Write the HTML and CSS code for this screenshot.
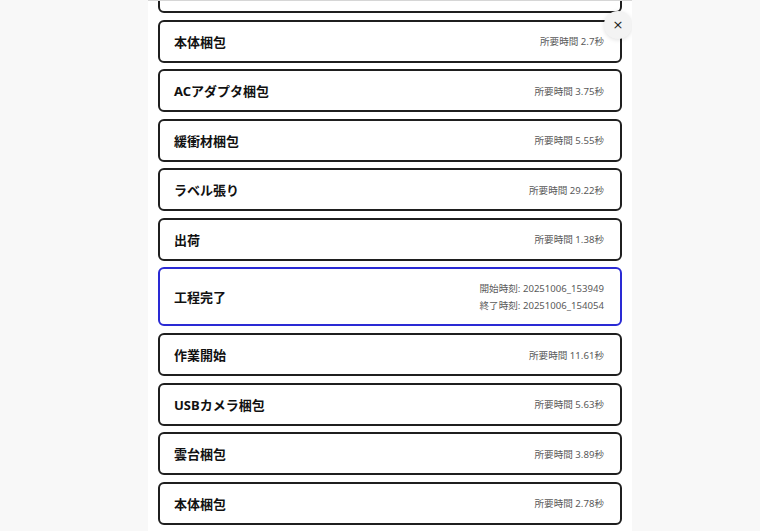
FILE: index.html
```html
<!DOCTYPE html>
<html lang="ja">
<head>
<meta charset="utf-8">
<link rel="stylesheet" href="styles.css">
</head>
<body>
<div class="panel">
  <div class="list">
    <div class="card" aria-hidden="true"></div>
    <div class="card"><span class="name">本体梱包</span><span class="meta">所要時間 2.7秒</span></div>
    <div class="card"><span class="name">ACアダプタ梱包</span><span class="meta">所要時間 3.75秒</span></div>
    <div class="card"><span class="name">緩衝材梱包</span><span class="meta">所要時間 5.55秒</span></div>
    <div class="card"><span class="name">ラベル張り</span><span class="meta">所要時間 29.22秒</span></div>
    <div class="card"><span class="name">出荷</span><span class="meta">所要時間 1.38秒</span></div>
    <div class="card card-done"><span class="name">工程完了</span><span class="meta meta-stack"><span>開始時刻: 20251006_153949</span><span>終了時刻: 20251006_154054</span></span></div>
    <div class="card"><span class="name">作業開始</span><span class="meta">所要時間 11.61秒</span></div>
    <div class="card"><span class="name">USBカメラ梱包</span><span class="meta">所要時間 5.63秒</span></div>
    <div class="card"><span class="name">雲台梱包</span><span class="meta">所要時間 3.89秒</span></div>
    <div class="card"><span class="name">本体梱包</span><span class="meta">所要時間 2.78秒</span></div>
  </div>
  <button class="close" aria-label="閉じる">×</button>
</div>
</body>
</html>
```
FILE: styles.css
```css
html, body {
  margin: 0;
  padding: 0;
  height: 100%;
}
body {
  background: #f8f8f8;
  font-family: "Noto Sans", "Noto Sans CJK JP", sans-serif;
  overflow: hidden;
}
.panel {
  position: relative;
  margin-left: 148px;
  width: 484px;
  height: 531px;
  background: #ffffff;
  border-top: 1px solid #d6d6d6;
  box-sizing: border-box;
  overflow: hidden;
}
.list {
  display: flex;
  flex-direction: column;
  gap: 6.65px;
  padding: 0 10px;
  margin-top: -31px;
}
.card {
  display: flex;
  align-items: center;
  justify-content: space-between;
  height: 42.95px;
  box-sizing: border-box;
  border: 2px solid #1f1f1f;
  border-radius: 6px;
  padding: 0 16px 0 14px;
  background: #fff;
}
.card-done {
  height: 59px;
  border-color: #2a2ad4;
}
.name {
  font-size: 13px;
  font-weight: 700;
  color: #111;
}
.meta {
  font-size: 9.6px;
  color: #5a5a5a;
}
.meta-stack {
  display: flex;
  flex-direction: column;
  align-items: flex-end;
  line-height: 17px;
}
.close {
  position: absolute;
  top: 10px;
  left: 456px;
  width: 28px;
  height: 28px;
  border: none;
  border-radius: 50%;
  background: #f3f3f3;
  box-shadow: 0 1px 4px rgba(0,0,0,0.12);
  color: #222;
  font-family: "DejaVu Sans", sans-serif;
  font-size: 13px;
  line-height: 28px;
  padding: 0;
  text-align: center;
}
```
